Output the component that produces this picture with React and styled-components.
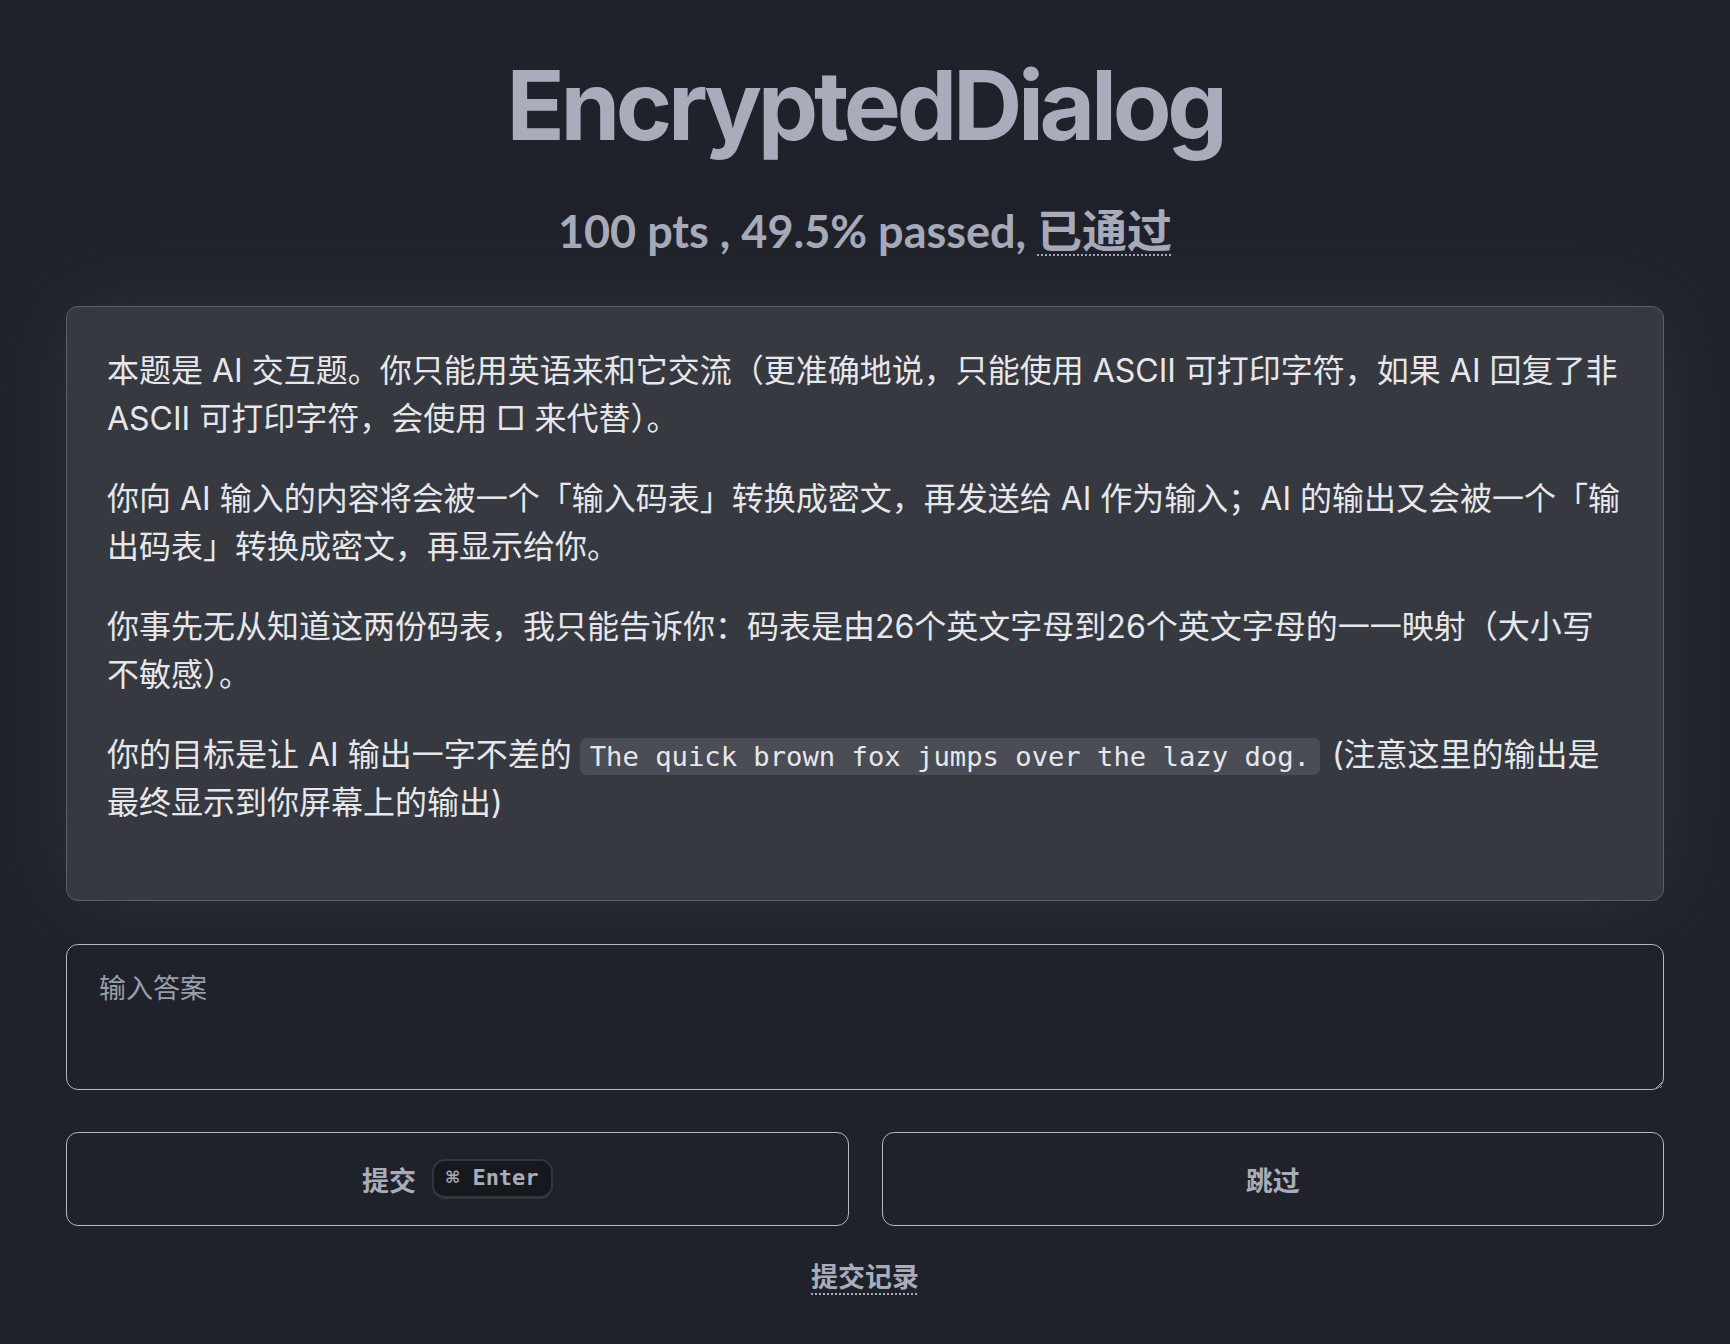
import React, { useState } from "react";
import styled, { createGlobalStyle } from "styled-components";

const GlobalStyle = createGlobalStyle`
  html, body {
    margin: 0;
    padding: 0;
    background: #1f222a;
  }
  body {
    font-family: "Inter", "Noto Sans CJK SC", sans-serif;
    color: #a8acbb;
  }
`;

const Page = styled.main`
  min-height: 100vh;
  box-sizing: border-box;
  padding: 48px 66px 40px;
  display: flex;
  flex-direction: column;
  align-items: stretch;
`;

const Title = styled.h1`
  margin: 0;
  text-align: center;
  font-family: "Inter", "Liberation Sans", sans-serif;
  font-weight: 700;
  font-size: 96px;
  line-height: 1.2;
  letter-spacing: -0.045em;
  color: #a8acbb;
`;

const Subtitle = styled.div`
  margin-top: 39px;
  text-align: center;
  font-family: "Lato", "Noto Sans CJK SC", sans-serif;
  font-weight: 700;
  font-size: 45px;
  line-height: 1.2;
  color: #a8acbb;
`;

const Status = styled.span`
  font-family: "Noto Sans CJK SC", sans-serif;
  text-decoration: underline dotted 2px;
  text-underline-offset: 6px;
`;

const Panel = styled.section`
  margin-top: 48px;
  padding: 40px 40px 41px;
  background: #363940;
  border: 1px solid #5b5e66;
  border-radius: 12px;
  box-shadow: 0 0 90px rgba(72, 76, 86, 0.35);
  color: #e6e7ea;
  font-size: 32px;
  line-height: 1.5;
`;

const Para = styled.p`
  margin: 0 0 32px;
`;

const Code = styled.code`
  font-family: "DejaVu Sans Mono", "Liberation Mono", monospace;
  font-size: 0.85em;
  padding: 3px 10px;
  margin: 0 12px 0 8px;
  background: #4a4d56;
  border-radius: 7px;
`;

const Answer = styled.textarea`
  display: block;
  margin-top: 43px;
  width: 100%;
  height: 146px;
  box-sizing: border-box;
  padding: 22px 32px;
  background: #1f222a;
  color: #e6e7ea;
  border: 1.5px solid #b4b7c4;
  border-radius: 12px;
  font-family: "Noto Sans CJK SC", sans-serif;
  font-size: 27px;
  line-height: 1.5;
  outline: none;

  &::placeholder {
    color: #9a9ea9;
  }
`;

const Actions = styled.div`
  margin-top: 42px;
  display: grid;
  grid-template-columns: 1fr 1fr;
  gap: 33px;
`;

const Button = styled.button`
  height: 94px;
  display: flex;
  align-items: center;
  justify-content: center;
  gap: 16px;
  background: transparent;
  border: 1.5px solid #b4b7c4;
  border-radius: 12px;
  color: #a8acbb;
  font-family: "Noto Sans CJK SC", sans-serif;
  font-weight: 700;
  font-size: 27px;
  cursor: pointer;
`;

const Kbd = styled.kbd`
  font-family: "DejaVu Sans Mono", monospace;
  font-weight: 700;
  font-size: 22px;
  line-height: 1.2;
  padding: 4px 12px;
  background: #15181d;
  border: 2px solid #33363d;
  border-bottom-width: 3px;
  border-radius: 13px;
  color: #a8acbb;
`;

const HistoryLink = styled.a`
  align-self: center;
  margin-top: 30px;
  font-family: "Noto Sans CJK SC", sans-serif;
  font-weight: 700;
  font-size: 27px;
  line-height: 1.5;
  color: #a8acbb;
  text-decoration: underline dotted 2px;
  text-underline-offset: 6px;
  cursor: pointer;
`;

export default function App() {
  const [answer, setAnswer] = useState("");

  return (
    <>
      <GlobalStyle />
      <Page>
        <Title>EncryptedDialog</Title>
        <Subtitle>
          100 pts , 49.5% passed, <Status>已通过</Status>
        </Subtitle>

        <Panel>
          <Para>
            本题是 AI 交互题。你只能用英语来和它交流（更准确地说，只能使用 ASCII
            可打印字符，如果 AI 回复了非 ASCII 可打印字符，会使用 □ 来代替）。
          </Para>
          <Para>
            你向 AI 输入的内容将会被一个「输入码表」转换成密文，再发送给 AI
            作为输入；AI 的输出又会被一个「输出码表」转换成密文，再显示给你。
          </Para>
          <Para>
            你事先无从知道这两份码表，我只能告诉你：码表是由26个英文字母到26个英文字母的一一映射（大小写不敏感）。
          </Para>
          <Para>
            你的目标是让 AI 输出一字不差的
            <Code>The quick brown fox jumps over the lazy dog.</Code>
            (注意这里的输出是最终显示到你屏幕上的输出)
          </Para>
        </Panel>

        <Answer
          placeholder="输入答案"
          value={answer}
          onChange={(e) => setAnswer(e.target.value)}
        />

        <Actions>
          <Button type="button">
            提交 <Kbd>⌘ Enter</Kbd>
          </Button>
          <Button type="button">跳过</Button>
        </Actions>

        <HistoryLink href="#">提交记录</HistoryLink>
      </Page>
    </>
  );
}
